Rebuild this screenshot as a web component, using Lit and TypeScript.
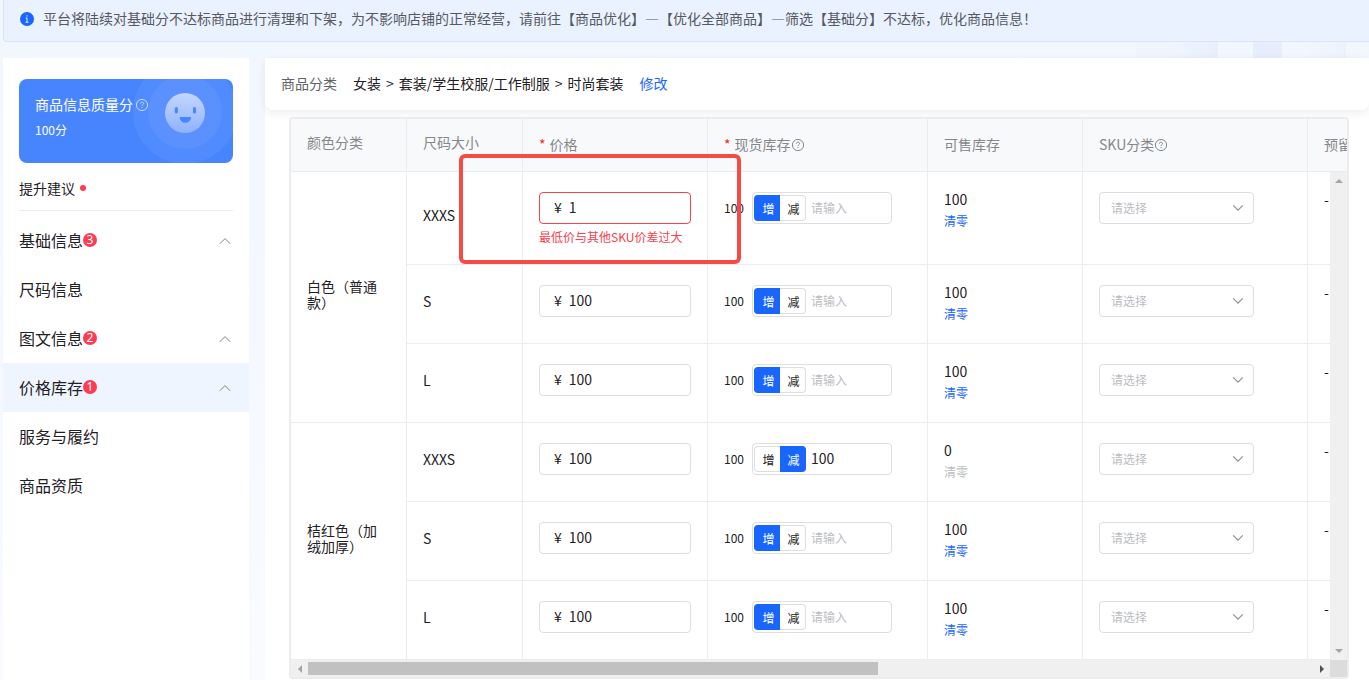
import { LitElement, html, css, nothing } from "lit";
import { customElement, property } from "lit/decorators.js";
import { classMap } from "lit/directives/class-map.js";

interface NavItem {
  label: string;
  count?: number;
  group?: boolean;
  active?: boolean;
}

interface Sku {
  size: string;
  price: string;
  error?: string;
  mode: "add" | "sub";
  change: string;
  sellable: number;
}

interface ColorGroup {
  color: string;
  skus: Sku[];
}

const NAV: NavItem[] = [
  { label: "基础信息", count: 3, group: true },
  { label: "尺码信息" },
  { label: "图文信息", count: 2, group: true },
  { label: "价格库存", count: 1, group: true, active: true },
  { label: "服务与履约" },
  { label: "商品资质" },
];

const sku = (size: string, extra: Partial<Sku> = {}): Sku => ({
  size,
  price: "100",
  mode: "add",
  change: "",
  sellable: 100,
  ...extra,
});

const GROUPS: ColorGroup[] = [
  {
    color: "白色（普通款）",
    skus: [sku("XXXS", { price: "1", error: "最低价与其他SKU价差过大" }), sku("S"), sku("L")],
  },
  {
    color: "桔红色（加绒加厚）",
    skus: [sku("XXXS", { mode: "sub", change: "100", sellable: 0 }), sku("S"), sku("L")],
  },
];

const helpIcon = html`<svg class="help" viewBox="0 0 14 14" width="14" height="14" fill="none" stroke="currentColor" aria-hidden="true">
  <circle cx="7" cy="7" r="5.6" />
  <path d="M5.4 5.7C5.4 4.7 6.1 4.1 7 4.1s1.6.6 1.6 1.5c0 1.1-1.6 1.2-1.6 2.3" />
  <path d="M7 9v1.1" />
</svg>`;

const base = css`
  *,
  *::before,
  *::after {
    box-sizing: border-box;
  }
  button,
  input,
  select {
    margin: 0;
    padding: 0;
    border: 0;
    background: none;
    font: inherit;
    color: inherit;
    outline: none;
  }
  button {
    cursor: pointer;
  }
  a {
    text-decoration: none;
  }
`;

@customElement("side-panel")
export class SidePanel extends LitElement {
  static styles = [
    base,
    css`
      :host {
        display: block;
        flex: none;
        width: 246px;
        padding-top: 21px;
        background: #fff;
      }
      .score {
        position: relative;
        height: 84px;
        margin: 0 16px;
        padding: 15px 16px;
        border-radius: 8px;
        background: #4785ff;
        color: #fff;
        overflow: hidden;
      }
      .face {
        position: absolute;
        top: 0;
        right: 0;
      }
      .score-title {
        position: relative;
        display: flex;
        align-items: center;
        gap: 2px;
        font-size: 14px;
        line-height: 20px;
      }
      .score-title .help {
        margin-top: 2px;
        color: #c8daff;
      }
      .score-value {
        margin-top: 6px;
        font-size: 12px;
        line-height: 20px;
      }
      .tips {
        display: flex;
        align-items: center;
        gap: 5px;
        height: 48px;
        margin: 0 16px;
        padding-top: 2px;
        border-bottom: 1px solid #ebecee;
        font-size: 14px;
      }
      .dot {
        width: 6px;
        height: 6px;
        border-radius: 50%;
        background: #ff3b52;
      }
      .nav {
        display: flex;
        flex-direction: column;
        padding-top: 5px;
      }
      .item {
        display: flex;
        align-items: center;
        height: 49px;
        padding: 0 18px 2px 16px;
        font-size: 16px;
        text-align: left;
      }
      .item.active {
        background: #eff5ff;
      }
      .badge {
        width: 14px;
        height: 14px;
        margin-top: 1px;
        border-radius: 50%;
        background: #ff3b52;
        color: #fff;
        font-family: "Noto Sans", sans-serif;
        font-size: 12px;
        line-height: 14px;
        text-align: center;
      }
      .arrow {
        margin-top: 2px;
        margin-left: auto;
      }
    `,
  ];

  render() {
    return html`
      <section class="score">
        <svg class="face" width="101" height="84" viewBox="0 0 101 84" aria-hidden="true">
          <defs>
            <linearGradient id="skin" x1="0" y1="0" x2="0" y2="1">
              <stop offset="0" stop-color="#c4d6ff" />
              <stop offset="1" stop-color="#8fb2ff" />
            </linearGradient>
          </defs>
          <circle cx="53" cy="33" r="52" fill="#fff" fill-opacity="0.05" />
          <circle cx="53" cy="33" r="37" fill="#fff" fill-opacity="0.06" />
          <circle cx="53" cy="34" r="20" fill="url(#skin)" />
          <rect x="42.8" y="28" width="3" height="6.6" rx="1.5" fill="#4785ff" />
          <rect x="61" y="28" width="3" height="6.6" rx="1.5" fill="#4785ff" />
          <path d="M48.4 38h10c.5 0 .8.3.7.8-.5 3-2.800 5-5.700 5s-5.200-2-5.700-5c-.1-.5.2-.8.7-.8z" fill="#4785ff" />
        </svg>
        <div class="score-title">商品信息质量分${helpIcon}</div>
        <div class="score-value">100分</div>
      </section>
      <div class="tips">提升建议<span class="dot"></span></div>
      <nav class="nav">
        ${NAV.map(
          (n) => html`<button class=${classMap({ item: true, active: !!n.active })} type="button">
            ${n.label}${n.count ? html`<span class="badge">${n.count}</span>` : nothing}
            ${n.group
              ? html`<svg class="arrow" width="12" height="8" viewBox="0 0 12 8" fill="none" stroke="#7f8186" aria-hidden="true">
                  <path d="M.8 6.800 6 1.600l5.200 5.200" />
                </svg>`
              : nothing}
          </button>`
        )}
      </nav>
    `;
  }
}

@customElement("sku-table")
export class SkuTable extends LitElement {
  @property({ attribute: false }) groups: ColorGroup[] = [];

  static styles = [
    base,
    css`
      :host {
        display: block;
        position: relative;
        border: 2px solid #ececee;
        border-radius: 4px;
        overflow: hidden;
      }
      table {
        width: 1172px;
        table-layout: fixed;
        border-collapse: separate;
        border-spacing: 0;
        font-size: 14px;
      }
      .c-name {
        width: 116px;
      }
      .c-price {
        width: 185px;
      }
      .c-stock {
        width: 220px;
      }
      .c-sell {
        width: 155px;
      }
      .c-sku {
        width: 225px;
      }
      th,
      td {
        padding: 0 16px;
        border-right: 1px solid #ebecee;
        border-bottom: 1px solid #ebecee;
        text-align: left;
        font-weight: 400;
      }
      th {
        height: 53px;
        padding-bottom: 6px;
        background: #f8f9fb;
        color: #85878b;
        white-space: nowrap;
      }
      th.field {
        padding-bottom: 2px;
      }
      .title {
        display: flex;
        align-items: center;
        line-height: 20px;
      }
      .title .help {
        margin-top: 2px;
      }
      .star {
        margin-right: 4px;
        color: #ff2222;
      }
      td {
        height: 79px;
        padding: 20px 16px 18px;
        vertical-align: top;
      }
      td.name {
        padding: 0 16px 6px;
        line-height: 16px;
        vertical-align: middle;
      }
      td.figure {
        padding-top: 17px;
        line-height: 20px;
      }
      .box {
        display: flex;
        align-items: center;
        height: 32px;
        border: 1px solid #dcdee1;
        border-radius: 4px;
        background: #fff;
      }
      .box input {
        flex: 1;
        min-width: 0;
        height: 30px;
        padding-bottom: 2px;
      }
      .box input::placeholder {
        color: #bbbdc1;
        font-size: 12px;
      }
      .price {
        gap: 7px;
        padding: 0 12px 0 14px;
      }
      .price span {
        padding-bottom: 2px;
      }
      .price.bad {
        border-color: #f7414c;
      }
      .error {
        margin-top: 4px;
        color: #f7414c;
        font-size: 12px;
        line-height: 18px;
        white-space: nowrap;
      }
      .stock {
        display: flex;
        align-items: center;
        gap: 8px;
        font-size: 12px;
      }
      .adjust {
        flex: none;
        width: 140px;
        padding-left: 1px;
        font-size: 14px;
      }
      .seg {
        display: flex;
        flex: none;
        margin-right: 5px;
      }
      .seg button {
        width: 26px;
        height: 26px;
        padding-top: 1px;
        padding-left: 2px;
        border: 1px solid #dcdee1;
        font-size: 12px;
        line-height: 22px;
      }
      .seg button:first-child {
        border-right: 0;
        border-radius: 4px 0 0 4px;
      }
      .seg button:last-child {
        border-left: 0;
        border-radius: 0 4px 4px 0;
      }
      .seg button.on {
        border-color: #1966ff;
        background: #1966ff;
        color: #fff;
      }
      .clear {
        display: block;
        margin-top: 2px;
        color: #1966ff;
        font-size: 12px;
        line-height: 20px;
      }
      .clear:disabled {
        color: #bbbdc1;
        cursor: default;
      }
      .select {
        position: relative;
        width: 155px;
      }
      .select select {
        width: 100%;
        height: 30px;
        padding: 0 32px 0 11px;
        appearance: none;
        color: #bbbdc1;
        font-size: 12px;
      }
      .select svg {
        position: absolute;
        top: 11px;
        right: 9px;
        pointer-events: none;
      }
      .marked {
        position: relative;
      }
      .mark {
        position: absolute;
        top: -18px;
        left: -64px;
        width: 282px;
        height: 110px;
        border: 4px solid #f64b45;
        border-radius: 6px;
        pointer-events: none;
      }
      .vbar {
        position: absolute;
        top: 53px;
        right: 0;
        bottom: 17px;
        width: 17px;
        display: flex;
        flex-direction: column;
        justify-content: space-between;
        align-items: center;
        padding: 7px 0;
        background: #f0f0f0;
      }
      .hbar {
        display: grid;
        grid-template-columns: 17px 1fr 17px 17px;
        align-items: center;
        justify-items: center;
        height: 17px;
        background: #f0f0f0;
      }
      .track {
        width: 100%;
      }
      .thumb {
        width: calc(57% - 3px);
        height: 13px;
        background: #c1c1c1;
      }
      .corner {
        width: 17px;
        height: 17px;
        background: #dcdcdc;
      }
    `,
  ];

  private row(s: Sku, index: number, group: ColorGroup) {
    const id = `${group.color}-${s.size}`;
    return html`<tr>
      ${index === 0 ? html`<td class="name" rowspan=${group.skus.length}>${group.color}</td>` : nothing}
      <td class="name">${s.size}</td>
      <td class=${classMap({ marked: !!s.error })}>
        <label class=${classMap({ box: true, price: true, bad: !!s.error })}>
          <span>¥</span><input type="text" aria-label="价格 ${id}" .value=${s.price} />
        </label>
        ${s.error ? html`<div class="error">${s.error}</div><div class="mark"></div>` : nothing}
      </td>
      <td>
        <div class="stock">
          100
          <div class="box adjust">
            <div class="seg">
              <button type="button" class=${classMap({ on: s.mode === "add" })}>增</button>
              <button type="button" class=${classMap({ on: s.mode === "sub" })}>减</button>
            </div>
            <input type="text" aria-label="现货库存 ${id}" placeholder="请输入" .value=${s.change} />
          </div>
        </div>
      </td>
      <td class="figure">
        ${s.sellable}
        <button type="button" class="clear" ?disabled=${s.sellable === 0}>清零</button>
      </td>
      <td>
        <div class="box select">
          <select aria-label="SKU分类 ${id}">
            <option>请选择</option>
          </select>
          <svg width="12" height="8" viewBox="0 0 12 8" fill="none" stroke="#8f9196" stroke-width="1.200" aria-hidden="true">
            <path d="M1.200 1.400 6 6.200l4.800-4.800" />
          </svg>
        </div>
      </td>
      <td class="figure">-</td>
    </tr>`;
  }

  render() {
    return html`
      <table>
        <colgroup>
          <col class="c-name" />
          <col class="c-name" />
          <col class="c-price" />
          <col class="c-stock" />
          <col class="c-sell" />
          <col class="c-sku" />
          <col class="c-sell" />
        </colgroup>
        <thead>
          <tr>
            <th><div class="title">颜色分类</div></th>
            <th><div class="title">尺码大小</div></th>
            <th class="field"><div class="title"><span class="star">*</span>价格</div></th>
            <th class="field"><div class="title"><span class="star">*</span>现货库存${helpIcon}</div></th>
            <th class="field"><div class="title">可售库存</div></th>
            <th class="field"><div class="title">SKU分类${helpIcon}</div></th>
            <th class="field"><div class="title">预留库存</div></th>
          </tr>
        </thead>
        <tbody>
          ${this.groups.map((g) => g.skus.map((s, i) => this.row(s, i, g)))}
        </tbody>
      </table>
      <div class="vbar" aria-hidden="true">
        <svg width="8" height="4" viewBox="0 0 8 4" fill="#a3a3a3"><path d="M0 4 4 0l4 4z" /></svg>
        <svg width="8" height="4" viewBox="0 0 8 4" fill="#a3a3a3"><path d="M0 0h8L4 4z" /></svg>
      </div>
      <div class="hbar" aria-hidden="true">
        <svg width="4" height="8" viewBox="0 0 4 8" fill="#a3a3a3"><path d="M4 0v8L0 4z" /></svg>
        <div class="track"><div class="thumb"></div></div>
        <svg width="4" height="8" viewBox="0 0 4 8" fill="#505050"><path d="M0 0l4 4-4 4z" /></svg>
        <div class="corner"></div>
      </div>
    `;
  }
}

@customElement("app-root")
export class AppRoot extends LitElement {
  static styles = [
    base,
    css`
      :host {
        display: flex;
        flex-direction: column;
        min-height: 100vh;
        padding-left: 3px;
        box-sizing: border-box;
        overflow: hidden;
        background: linear-gradient(#f2f7fe 0, #f3f7ff 200px, #f9fbff 680px);
        color: #1f2126;
        font-family: "Noto Sans CJK SC", "Noto Sans", sans-serif;
        font-size: 14px;
        line-height: 22px;
        text-spacing-trim: space-all;
      }
      .notice {
        display: flex;
        align-items: center;
        gap: 9px;
        padding: 7px 16px 12px;
        border: 1px solid #dae5f6;
        border-width: 0 0 1px 1px;
        border-radius: 0 0 0 4px;
        background: #eaf2ff;
        color: #56595f;
      }
      .notice svg {
        margin-top: 2px;
      }
      .strip {
        height: 16px;
        background: linear-gradient(
            90deg,
            #f0f4fd 0 32px,
            #e8effc 82px,
            #f2f6fe 82px 117px,
            #e7edfc 117px 146px,
            #f2f6fe 146px 170px,
            #ecf1fc 210px,
            #f2f7fe 210px
          )
          right / 233px 16px no-repeat;
      }
      .layout {
        display: flex;
        flex: 1;
        gap: 16px;
      }
      main {
        flex: 1;
        min-width: 0;
        background: #fff;
      }
      .category {
        display: flex;
        align-items: center;
        gap: 16px;
        height: 52px;
        padding: 0 16px 2px;
        border-radius: 0 0 8px 8px;
        box-shadow: 0 3px 10px rgba(0, 0, 0, 0.07);
      }
      .caption {
        color: #606369;
      }
      .path {
        display: flex;
        gap: 5px;
      }
      .category a {
        color: #1966ff;
      }
      .content {
        padding: 7px 20px 1px 24px;
      }
    `,
  ];

  connectedCallback() {
    super.connectedCallback();
    this.lang = "zh-CN";
  }

  render() {
    return html`
      <div class="notice" role="status">
        <svg width="14" height="14" viewBox="0 0 14 14" aria-hidden="true">
          <circle cx="7" cy="7" r="7" fill="#1966ff" />
          <path d="M7 3.200v1.400M5.800 6H7v4M5.500 10.300h3" fill="none" stroke="#fff" stroke-opacity="0.85" />
        </svg>
        <span>平台将陆续对基础分不达标商品进行清理和下架，为不影响店铺的正常经营，请前往【商品优化】—【优化全部商品】—筛选【基础分】不达标，优化商品信息！</span>
      </div>
      <div class="strip"></div>
      <div class="layout">
        <side-panel></side-panel>
        <main>
          <div class="category">
            <span class="caption">商品分类</span>
            <span class="path">
              <span>女装</span><span>&gt;</span><span>套装/学生校服/工作制服</span><span>&gt;</span><span>时尚套装</span>
            </span>
            <a href="#category">修改</a>
          </div>
          <div class="content">
            <sku-table .groups=${GROUPS}></sku-table>
          </div>
        </main>
      </div>
    `;
  }
}
